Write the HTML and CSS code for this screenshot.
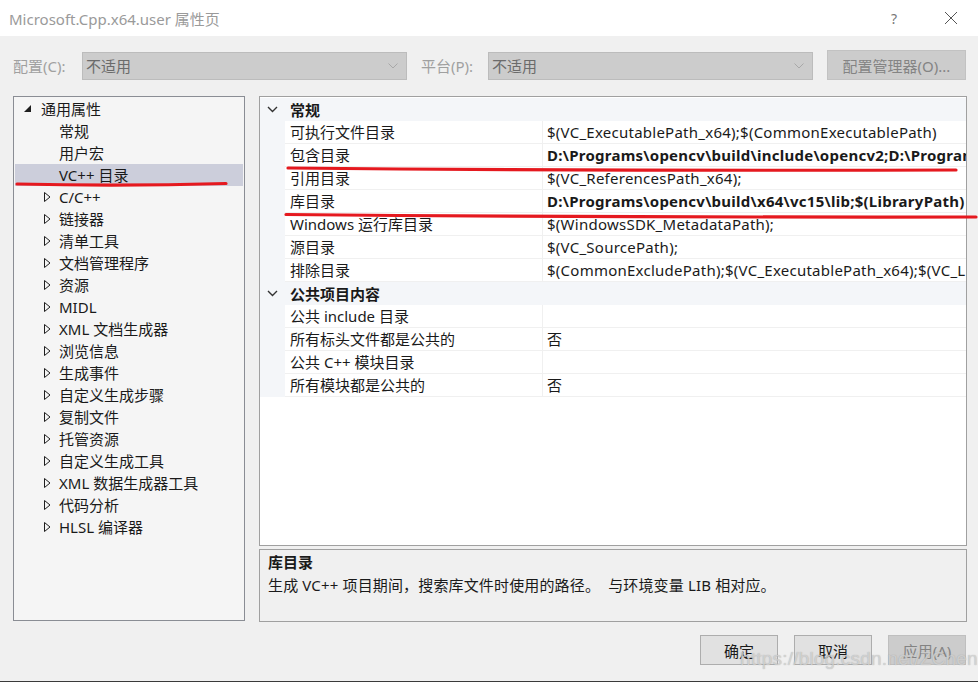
FILE: index.html
```html
<!DOCTYPE html>
<html lang="zh-CN">
<head>
<meta charset="utf-8">
<title>Microsoft.Cpp.x64.user 属性页</title>
<link rel="stylesheet" href="styles.css">
</head>
<body>
<div class="window">
  <div class="titlebar">
    <span class="title">Microsoft.Cpp.x64.user 属性页</span>
    <span class="help">?</span>
    <span class="close"><svg width="14" height="14" viewBox="0 0 14 14"><path d="M1 1 L13 13 M13 1 L1 13" stroke="#555" stroke-width="1" fill="none"/></svg></span>
  </div>

  <div class="config">
    <span class="lbl lbl1">配置(C):</span>
    <div class="select"><span>不适用</span><svg class="dd" width="10" height="6" viewBox="0 0 10 6"><path d="M0.5 0.5 L5 5 L9.5 0.5" stroke="#a8a8a8" fill="none"/></svg></div>
    <span class="lbl lbl2">平台(P):</span>
    <div class="select"><span>不适用</span><svg class="dd" width="10" height="6" viewBox="0 0 10 6"><path d="M0.5 0.5 L5 5 L9.5 0.5" stroke="#a8a8a8" fill="none"/></svg></div>
    <div class="mgr">配置管理器(O)...</div>
  </div>

  <div class="main">
    <div class="tree">
      <div class="node root"><svg class="tri" width="8" height="8" viewBox="0 0 8 8"><path d="M7 0 L7 7 L0 7 Z" fill="#1e1e1e"/></svg><span>通用属性</span></div>
      <div class="node leaf">常规</div>
      <div class="node leaf">用户宏</div>
      <div class="node leaf sel">VC++ 目录</div>
      <div class="node"><svg class="tri2" width="7" height="10" viewBox="0 0 7 10"><path d="M0.5 0.5 L6 5 L0.5 9.5 Z" fill="none" stroke="#1e1e1e"/></svg><span>C/C++</span></div>
      <div class="node"><svg class="tri2" width="7" height="10" viewBox="0 0 7 10"><path d="M0.5 0.5 L6 5 L0.5 9.5 Z" fill="none" stroke="#1e1e1e"/></svg><span>链接器</span></div>
      <div class="node"><svg class="tri2" width="7" height="10" viewBox="0 0 7 10"><path d="M0.5 0.5 L6 5 L0.5 9.5 Z" fill="none" stroke="#1e1e1e"/></svg><span>清单工具</span></div>
      <div class="node"><svg class="tri2" width="7" height="10" viewBox="0 0 7 10"><path d="M0.5 0.5 L6 5 L0.5 9.5 Z" fill="none" stroke="#1e1e1e"/></svg><span>文档管理程序</span></div>
      <div class="node"><svg class="tri2" width="7" height="10" viewBox="0 0 7 10"><path d="M0.5 0.5 L6 5 L0.5 9.5 Z" fill="none" stroke="#1e1e1e"/></svg><span>资源</span></div>
      <div class="node"><svg class="tri2" width="7" height="10" viewBox="0 0 7 10"><path d="M0.5 0.5 L6 5 L0.5 9.5 Z" fill="none" stroke="#1e1e1e"/></svg><span>MIDL</span></div>
      <div class="node"><svg class="tri2" width="7" height="10" viewBox="0 0 7 10"><path d="M0.5 0.5 L6 5 L0.5 9.5 Z" fill="none" stroke="#1e1e1e"/></svg><span>XML 文档生成器</span></div>
      <div class="node"><svg class="tri2" width="7" height="10" viewBox="0 0 7 10"><path d="M0.5 0.5 L6 5 L0.5 9.5 Z" fill="none" stroke="#1e1e1e"/></svg><span>浏览信息</span></div>
      <div class="node"><svg class="tri2" width="7" height="10" viewBox="0 0 7 10"><path d="M0.5 0.5 L6 5 L0.5 9.5 Z" fill="none" stroke="#1e1e1e"/></svg><span>生成事件</span></div>
      <div class="node"><svg class="tri2" width="7" height="10" viewBox="0 0 7 10"><path d="M0.5 0.5 L6 5 L0.5 9.5 Z" fill="none" stroke="#1e1e1e"/></svg><span>自定义生成步骤</span></div>
      <div class="node"><svg class="tri2" width="7" height="10" viewBox="0 0 7 10"><path d="M0.5 0.5 L6 5 L0.5 9.5 Z" fill="none" stroke="#1e1e1e"/></svg><span>复制文件</span></div>
      <div class="node"><svg class="tri2" width="7" height="10" viewBox="0 0 7 10"><path d="M0.5 0.5 L6 5 L0.5 9.5 Z" fill="none" stroke="#1e1e1e"/></svg><span>托管资源</span></div>
      <div class="node"><svg class="tri2" width="7" height="10" viewBox="0 0 7 10"><path d="M0.5 0.5 L6 5 L0.5 9.5 Z" fill="none" stroke="#1e1e1e"/></svg><span>自定义生成工具</span></div>
      <div class="node"><svg class="tri2" width="7" height="10" viewBox="0 0 7 10"><path d="M0.5 0.5 L6 5 L0.5 9.5 Z" fill="none" stroke="#1e1e1e"/></svg><span>XML 数据生成器工具</span></div>
      <div class="node"><svg class="tri2" width="7" height="10" viewBox="0 0 7 10"><path d="M0.5 0.5 L6 5 L0.5 9.5 Z" fill="none" stroke="#1e1e1e"/></svg><span>代码分析</span></div>
      <div class="node"><svg class="tri2" width="7" height="10" viewBox="0 0 7 10"><path d="M0.5 0.5 L6 5 L0.5 9.5 Z" fill="none" stroke="#1e1e1e"/></svg><span>HLSL 编译器</span></div>
    </div>

    <div class="right">
      <div class="grid">
        <div class="cat"><svg class="chev" width="11" height="7" viewBox="0 0 11 7"><path d="M1 1 L5.5 5.5 L10 1" stroke="#333" stroke-width="1.4" fill="none"/></svg><span>常规</span></div>
        <div class="row"><div class="gut"></div><div class="name">可执行文件目录</div><div class="val">$(VC_ExecutablePath_x64);$(CommonExecutablePath)</div></div>
        <div class="row"><div class="gut"></div><div class="name">包含目录</div><div class="val bold">D:\Programs\opencv\build\include\opencv2;D:\Programs\opencv\build\include;$(IncludePath)</div></div>
        <div class="row"><div class="gut"></div><div class="name">引用目录</div><div class="val">$(VC_ReferencesPath_x64);</div></div>
        <div class="row"><div class="gut"></div><div class="name">库目录</div><div class="val bold">D:\Programs\opencv\build\x64\vc15\lib;$(LibraryPath)</div></div>
        <div class="row"><div class="gut"></div><div class="name">Windows 运行库目录</div><div class="val">$(WindowsSDK_MetadataPath);</div></div>
        <div class="row"><div class="gut"></div><div class="name">源目录</div><div class="val">$(VC_SourcePath);</div></div>
        <div class="row"><div class="gut"></div><div class="name">排除目录</div><div class="val">$(CommonExcludePath);$(VC_ExecutablePath_x64);$(VC_LibraryPath_x64)</div></div>
        <div class="cat"><svg class="chev" width="11" height="7" viewBox="0 0 11 7"><path d="M1 1 L5.5 5.5 L10 1" stroke="#333" stroke-width="1.4" fill="none"/></svg><span>公共项目内容</span></div>
        <div class="row"><div class="gut"></div><div class="name">公共 include 目录</div><div class="val"></div></div>
        <div class="row"><div class="gut"></div><div class="name">所有标头文件都是公共的</div><div class="val">否</div></div>
        <div class="row"><div class="gut"></div><div class="name">公共 C++ 模块目录</div><div class="val"></div></div>
        <div class="row"><div class="gut"></div><div class="name">所有模块都是公共的</div><div class="val">否</div></div>
      </div>
      <div class="desc">
        <div class="desc-title">库目录</div>
        <div class="desc-text">生成 VC++ 项目期间，搜索库文件时使用的路径。&nbsp; 与环境变量 LIB 相对应。</div>
      </div>
    </div>
  </div>

  <div class="buttons">
    <div class="btn">确定</div>
    <div class="btn">取消</div>
    <div class="btn disabled">应用(A)</div>
  </div>

  <svg class="marks" width="978" height="682" viewBox="0 0 978 682">
    <path d="M17 184 Q120 186.5 226 183.5" stroke="#e5191f" stroke-width="3.2" stroke-linecap="round" fill="none"/>
    <path d="M288 168 Q620 171 956 170" stroke="#e5191f" stroke-width="3.2" stroke-linecap="round" fill="none"/>
    <path d="M286 214.5 Q630 217.5 976 217" stroke="#e5191f" stroke-width="3.2" stroke-linecap="round" fill="none"/>
  </svg>
  <div class="watermark">https://blog.csdn.net/ZChen1996</div>
</div>
</body>
</html>
```

FILE: styles.css
```css
* { box-sizing: border-box; }
html, body { margin: 0; padding: 0; }
body {
  font-family: "Noto Sans", "Noto Sans CJK SC", sans-serif;
  font-size: 15px;
  color: #1a1a1a;
  background: #f0f0f0;
}
.window {
  position: relative;
  width: 978px;
  height: 682px;
  background: #f0f0f0;
  border-bottom: 1px solid #3a3a3a;
  overflow: hidden;
}
.titlebar {
  height: 36px;
  background: #ffffff;
  display: flex;
  align-items: center;
  padding-left: 9px;
}
.title { color: #9a9a9a; font-size: 15px; flex: 1; }
.help { color: #777; font-size: 14px; width: 20px; margin-right: 33px; font-family: "Noto Sans", sans-serif; }
.close { width: 14px; height: 14px; margin-right: 20px; display: flex; }

.config {
  display: flex;
  align-items: center;
  height: 30px;
  margin-top: 14px;
  padding-left: 13px;
  color: #a0a0a0;
}
.lbl { display: block; }
.lbl1 { width: 69px; }
.lbl2 { width: 67px; margin-left: 14px; }
.select {
  width: 325px;
  height: 28px;
  margin-top: 2px;
  background: #cccccc;
  border: 1px solid #bcbcbc;
  display: flex;
  align-items: center;
  padding-left: 3px;
  padding-bottom: 1px;
  color: #6b6b6b;
}
.select span { flex: 1; }
.select .dd { margin-right: 8px; }
.mgr {
  margin-left: 14px;
  width: 139px;
  height: 30px;
  background: #cccccc;
  border: 1px solid #c2c2c2;
  color: #848484;
  display: flex;
  align-items: center;
  justify-content: center;
}

.main {
  display: flex;
  margin-top: 16px;
  padding-left: 13px;
  gap: 14px;
}
.tree {
  width: 232px;
  height: 525px;
  background: #f5f5f5;
  border: 1px solid #8a8d94;
  padding-top: 1px;
}
.node {
  height: 22px;
  line-height: 22px;
  display: flex;
  align-items: center;
  padding-left: 29px;
  margin: 0 1px;
  white-space: nowrap;
}
.node .tri2 { margin-right: 8px; }
.node.root { padding-left: 9px; }
.node.root .tri { margin-right: 9px; margin-top: -1px; }
.node.leaf { padding-left: 44px; }
.node.sel { background: #cccedb; }

.right {
  width: 708px;
  display: flex;
  flex-direction: column;
  gap: 3px;
}
.grid {
  height: 450px;
  background: #ffffff;
  border: 1px solid #a0a0a0;
  padding-top: 1px;
}
.cat {
  height: 23px;
  display: flex;
  align-items: center;
  background: #f4f6f9;
  font-weight: bold;
  padding-left: 7px;
}
.cat .chev { margin-right: 12px; }
.row {
  height: 23px;
  display: flex;
}
.gut { width: 25px; background: #f4f6f9; flex: none; }
.name {
  width: 258px;
  flex: none;
  padding-left: 5px;
  line-height: 23px;
  border-right: 1px solid #f0f0f0;
  border-bottom: 1px solid #f0f0f0;
  white-space: nowrap;
  overflow: hidden;
}
.val {
  flex: 1;
  min-width: 0;
  padding-left: 4px;
  line-height: 23px;
  letter-spacing: 0.25px;
  border-bottom: 1px solid #f0f0f0;
  white-space: nowrap;
  overflow: hidden;
}
.val.bold { font-weight: bold; }

.desc {
  height: 73px;
  border: 1px solid #a0a0a0;
  background: #f0f0f0;
  padding: 1px 8px 0;
}
.desc-title { font-weight: bold; line-height: 23px; }
.desc-text { line-height: 23px; letter-spacing: 0.15px; }

.buttons {
  display: flex;
  justify-content: flex-end;
  gap: 16px;
  margin-top: 13px;
  padding-right: 12px;
}
.btn {
  width: 78px;
  height: 30px;
  background: #e1e1e1;
  border: 1px solid #adadad;
  display: flex;
  align-items: center;
  justify-content: center;
}
.btn.disabled { background: #cccccc; border-color: #bfbfbf; color: #838383; }

.marks { position: absolute; left: 0; top: 0; pointer-events: none; }
.watermark {
  position: absolute;
  left: 740px;
  top: 648px;
  font-family: "Liberation Sans", Arial, sans-serif;
  font-size: 19px;
  color: rgba(225, 225, 225, 0.7);
  text-shadow: 0 0 1px rgba(120,120,120,0.6);
  letter-spacing: 0.2px;
  white-space: nowrap;
}
```
